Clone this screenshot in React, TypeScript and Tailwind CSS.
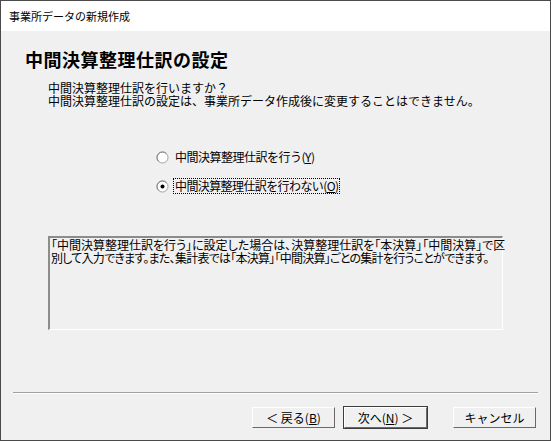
import React from "react";

const font = { fontFamily: '"Noto Sans CJK JP", "Noto Sans", sans-serif' };

const Radio = ({ checked }: { checked?: boolean }) => (
  <svg width="13" height="13" viewBox="0 0 13 13" className="shrink-0">
    <circle cx="6.5" cy="6.5" r="5.5" fill="#ffffff" stroke="#a0a0a0" />
    <path d="M2.6 10.4 A5.5 5.5 0 0 1 10.4 2.6" fill="none" stroke="#808080" />
    {checked && <circle cx="6.5" cy="6.5" r="2" fill="#000000" />}
  </svg>
);

const Button = ({
  children,
  primary,
}: {
  children: React.ReactNode;
  primary?: boolean;
}) => (
  <div
    className={
      "w-[85px] h-[23px] " +
      (primary ? "border border-[#3c3c3c]" : "border border-transparent")
    }
  >
    <div className="w-full h-full border-t border-l border-white border-r border-b border-r-[#696969] border-b-[#696969] bg-[#f0f0f0] flex items-center justify-center text-[12px] leading-[14px] text-black">
      {children}
    </div>
  </div>
);

const App = () => {
  return (
    <div
      className="w-[551px] h-[441px] border border-[#4a4a4a] bg-[#f0f0f0] flex flex-col text-black"
      style={font}
    >
      {/* title bar */}
      <div className="h-[30px] bg-white flex items-center pl-[8px] text-[11px] leading-[14px]">
        事業所データの新規作成
      </div>

      <div className="flex-1 flex flex-col">
        <h1 className="mt-[18px] ml-[24px] text-[18px] leading-[20px] font-bold tracking-[0.5px]">
          中間決算整理仕訳の設定
        </h1>

        <div className="mt-[12px] ml-[47px] text-[12px] leading-[13px]">
          <div>中間決算整理仕訳を行いますか？</div>
          <div>中間決算整理仕訳の設定は、事業所データ作成後に変更することはできません。</div>
        </div>

        <div className="mt-[42px] ml-[155px] flex flex-col gap-[13px] text-[12px] leading-[14px]">
          <div className="h-[16px] flex items-center">
            <Radio />
            <span className="ml-[5px] px-[1px] tracking-[-0.5px]">
              中間決算整理仕訳を行う(<span className="underline">Y</span>)
            </span>
          </div>
          <div className="h-[16px] flex items-center">
            <Radio checked />
            <span className="ml-[4px] h-[16px] flex items-center px-[1px] border border-dotted border-black tracking-[-0.6px]">
              中間決算整理仕訳を行わない(<span className="underline">O</span>)
            </span>
          </div>
        </div>

        <div className="mt-[42px] ml-[47px] w-[455px] h-[94px] border-t-2 border-l-2 border-t-[#8c8c8c] border-l-[#8c8c8c] border-r border-b border-r-white border-b-white text-[12px] leading-[13px] px-[1px] [font-feature-settings:'palt'] whitespace-nowrap">
          <div>「中間決算整理仕訳を行う」に設定した場合は、決算整理仕訳を「本決算」「中間決算」で区</div>
          <div className="tracking-[-0.75px]">別して入力できます。また、集計表では「本決算」「中間決算」ごとの集計を行うことができます。</div>
        </div>

        <div className="mt-[62px] ml-[12px] w-[525px] border-t border-t-[#a0a0a0] border-b border-b-white" />

        <div className="mt-[12px] flex pl-[250px]">
          <Button>
            ＜ 戻る(<span className="underline">B</span>)
          </Button>
          <div className="ml-[7px]">
            <Button primary>
              次へ(<span className="underline">N</span>) ＞
            </Button>
          </div>
          <div className="ml-[24px]">
            <Button>キャンセル</Button>
          </div>
        </div>
      </div>
    </div>
  );
};

export default App;
